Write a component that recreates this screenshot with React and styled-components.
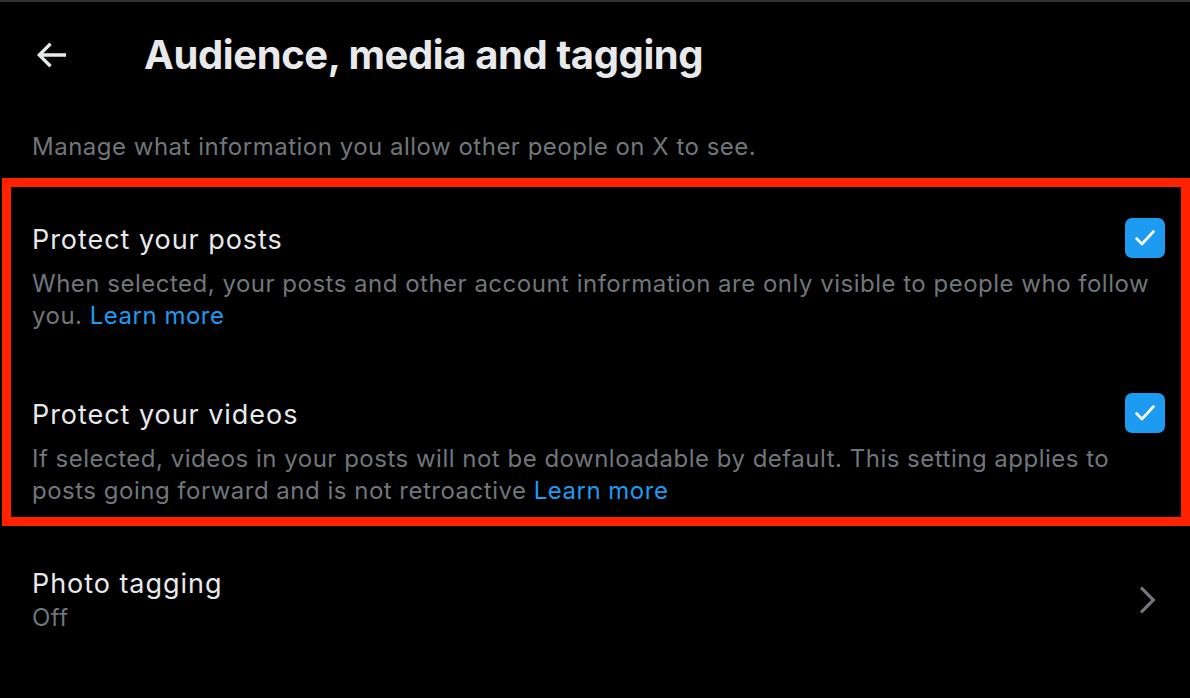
import styled, { createGlobalStyle } from 'styled-components';

const GlobalStyle = createGlobalStyle`
  html, body {
    margin: 0;
    padding: 0;
    background: #000;
  }
  body {
    font-family: Inter, "Noto Sans", sans-serif;
    -webkit-font-smoothing: antialiased;
  }
`;

const Page = styled.div`
  width: 1190px;
  height: 698px;
  background: #000;
  border-top: 2px solid #2f3336;
  box-sizing: border-box;
  overflow: hidden;
`;

const Header = styled.header`
  display: flex;
  align-items: center;
  height: 106px;
  padding-left: 31px;
`;

const BackButton = styled.button`
  display: flex;
  align-items: center;
  justify-content: center;
  width: 40px;
  height: 40px;
  padding: 0;
  background: none;
  border: none;
  color: #e7e9ea;
  cursor: pointer;
`;

const Title = styled.h1`
  margin: 0 0 0 73px;
  font-size: 40px;
  font-weight: 700;
  line-height: 48px;
  color: #e7e9ea;
  letter-spacing: -0.4px;
`;

const Intro = styled.p`
  margin: 23px 0 0;
  padding-left: 32px;
  font-size: 24px;
  line-height: 32px;
  letter-spacing: 0.5px;
  color: #71767b;
`;

const Highlight = styled.section`
  margin: 15px 0 0 2px;
  border: 9px solid #ff2200;
  padding: 35px 16px 10px 21px;
  display: flex;
  flex-direction: column;
  gap: 65px;
`;

const Setting = styled.div`
  display: flex;
  flex-direction: column;
`;

const SettingHead = styled.div`
  display: flex;
  align-items: center;
  justify-content: space-between;
  height: 36px;
`;

const SettingTitle = styled.div`
  font-size: 27px;
  line-height: 36px;
  letter-spacing: 0.95px;
  color: #e7e9ea;
`;

const SettingDesc = styled.div`
  margin-top: 10px;
  font-size: 24px;
  line-height: 32px;
  letter-spacing: 0.5px;
  color: #71767b;
`;

const Link = styled.a`
  color: #1d9bf0;
  text-decoration: none;
`;

const Checkbox = styled.span`
  flex: none;
  width: 40px;
  height: 40px;
  margin-top: ${props => props.offset || 0}px;
  border-radius: 7px;
  background: #1d9bf0;
  display: flex;
  align-items: center;
  justify-content: center;
`;

const NavRow = styled.div`
  display: flex;
  align-items: center;
  justify-content: space-between;
  margin-top: 40px;
  padding: 0 34px 0 32px;
`;

const NavValue = styled.div`
  font-size: 24px;
  line-height: 32px;
  letter-spacing: 0.5px;
  color: #71767b;
`;

const Chevron = styled.svg`
  width: 38px;
  height: 38px;
  margin-right: -10px;
  fill: #71767b;
`;

const CheckMark = () => (
  <svg width="24" height="24" viewBox="0 0 24 24">
    <path d="M3.5 12.5l5.5 5.5L20.5 5.5" fill="none" stroke="#fff" strokeWidth="2.6" strokeLinecap="round" strokeLinejoin="round" />
  </svg>
);

const settings = [
  {
    title: 'Protect your posts',
    desc: 'When selected, your posts and other account information are only visible to people who follow you.',
    offset: -4,
  },
  {
    title: 'Protect your videos',
    desc: 'If selected, videos in your posts will not be downloadable by default. This setting applies to posts going forward and is not retroactive',
    offset: -4,
  },
];

export default function App() {
  return (
    <>
      <GlobalStyle />
      <Page>
        <Header>
          <BackButton aria-label="Back">
            <svg width="40" height="40" viewBox="0 0 24 24" fill="currentColor">
              <path d="M7.414 13l5.043 5.04-1.414 1.42L3.586 12l7.457-7.46 1.414 1.42L7.414 11H21v2H7.414z" />
            </svg>
          </BackButton>
          <Title>Audience, media and tagging</Title>
        </Header>
        <Intro>Manage what information you allow other people on X to see.</Intro>
        <Highlight>
          {settings.map(s => (
            <Setting key={s.title}>
              <SettingHead>
                <SettingTitle>{s.title}</SettingTitle>
                <Checkbox offset={s.offset}>
                  <CheckMark />
                </Checkbox>
              </SettingHead>
              <SettingDesc>
                {s.desc} <Link href="#">Learn more</Link>
              </SettingDesc>
            </Setting>
          ))}
        </Highlight>
        <NavRow>
          <div>
            <SettingTitle>Photo tagging</SettingTitle>
            <NavValue>Off</NavValue>
          </div>
          <Chevron viewBox="0 0 24 24">
            <path d="M14.586 12L7.543 4.96l1.414-1.42L17.414 12l-8.457 8.46-1.414-1.42L14.586 12z" />
          </Chevron>
        </NavRow>
      </Page>
    </>
  );
}
